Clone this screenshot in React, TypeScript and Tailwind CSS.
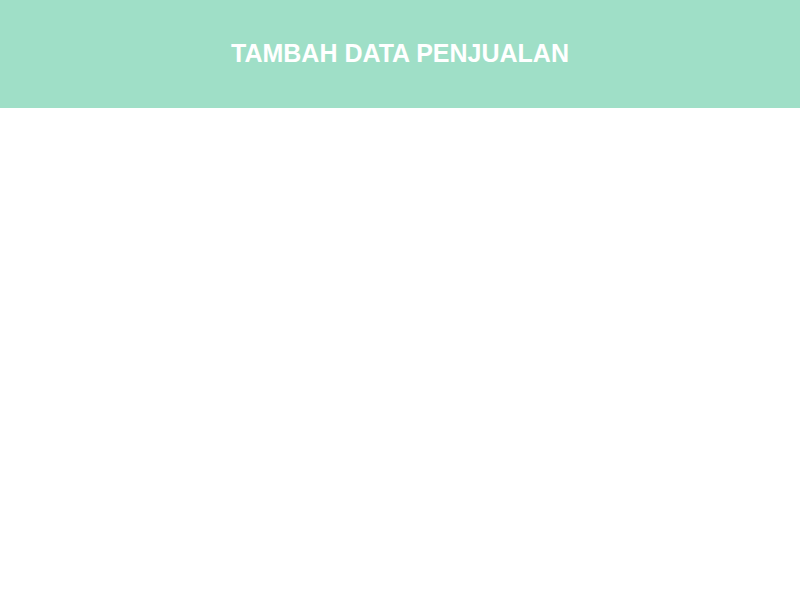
export default function App() {
  return (
    <div className="min-h-screen bg-white" style={{ fontFamily: "'Liberation Sans', Arial, sans-serif" }}>
      <header className="h-[108px] bg-[#9fdfc7] flex items-center justify-center">
        <h1 className="text-[25px] font-bold text-white">TAMBAH DATA PENJUALAN</h1>
      </header>
    </div>
  )
}
